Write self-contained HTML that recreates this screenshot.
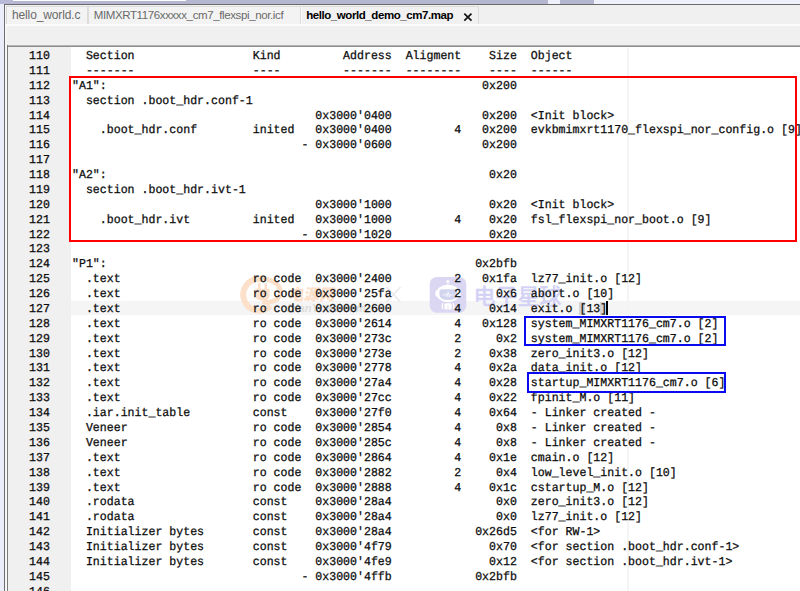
<!DOCTYPE html>
<html><head><meta charset="utf-8"><title>hello_world_demo_cm7.map</title>
<style>
html,body{margin:0;padding:0}
body{width:800px;height:591px;overflow:hidden;position:relative;background:#f0f0f0;font-family:"Liberation Sans",sans-serif}
.abs{position:absolute}
#topstrip{left:0;top:0;width:800px;height:4px;background:#eef0fb}
#leftstrip{left:0;top:0;width:4px;height:591px;background:#ebedfa}
#frameT{left:4px;top:3.6px;width:796px;height:1.1px;background:#6a6a6a}
#frameL{left:4px;top:4px;width:1px;height:587px;background:#6e6e6e}
#frameL2{left:5px;top:5px;width:2px;height:586px;background:#f7f7f7}
#tabs{left:6px;top:6px;height:18px;width:794px}
.tab{position:absolute;top:0;height:17px;border:1px solid #dcdcdc;border-bottom:none;background:#f3f3f3;font-size:12px;line-height:17px;color:#6a6a6a;white-space:nowrap;box-sizing:content-box}
.tab span{position:absolute;top:0}
#whiteline{left:5px;top:24px;width:795px;height:2px;background:#fbfbfd}
#edT1{left:7px;top:45px;width:793px;height:1px;background:#b4b4b4}
#edT2{left:7px;top:46px;width:793px;height:1px;background:#8c8c8c}
#edL{left:7px;top:45px;width:1px;height:546px;background:#7c7c7c}
#editor{left:8px;top:47px;width:792px;height:544px;background:#fff;overflow:hidden}
#gutter{left:8px;top:47px;width:63px;height:544px;background:#f0f0f0}
#edge{left:627px;top:48px;width:2px;height:543px;background:#f4f4f4}
#curline{left:71px;top:301px;width:729px;height:14px;background:#f5f5f5}
.ln{position:absolute;left:0;height:15px;line-height:15px;white-space:pre;font-family:"Liberation Mono","DejaVu Sans Mono",monospace;font-size:12.0px;letter-spacing:0.000px;color:#0c0c0c;-webkit-text-stroke:0.28px #0c0c0c}
.no{position:absolute;left:28.8px;top:0;transform:scale(0.96528,1.0) skewX(0.05deg);transform-origin:0 10px}
.tx{position:absolute;left:72.0px;top:0;transform:scale(0.96528,1.0) skewX(0.05deg);transform-origin:0 10px}
.box{position:absolute;box-sizing:border-box;border:2px solid #f00}
.bbox{border-color:#0a0af0}
</style></head>
<body>
<div class="abs" id="topstrip"></div>
<div class="abs" style="left:0;top:0;width:13px;height:4px;background:#b8b9d6"></div>
<div class="abs" style="left:13px;top:0;width:173px;height:1px;background:#fcfcff"></div>
<div class="abs" style="left:13px;top:1px;width:173px;height:3px;background:#b5b6d0"></div>
<div class="abs" style="left:186px;top:0;width:362px;height:4px;background:#b5b6d0"></div>
<div class="abs" style="left:560px;top:0;width:33.5px;height:4px;background:#b5b6d0"></div>
<div class="abs" id="leftstrip" style="top:4px"></div>
<div class="abs" id="frameT"></div>
<div class="abs" id="frameL"></div>
<div class="abs" id="frameL2"></div>
<div class="abs" id="tabs">
  <div class="tab" style="left:0;width:80px"><span id="t1" style="left:5px;letter-spacing:-0.13px">hello_world.c</span></div>
  <div class="tab" style="left:82px;width:211px"><span id="t2" style="left:4.7px;font-size:11.5px;letter-spacing:-0.38px">MIMXRT1176xxxxx_cm7_flexspi_nor.icf</span></div>
  <div class="tab" style="left:295px;width:176px;color:#000;background:#f1f1f1;border-left-color:#fbfbfb"><span id="t3" style="left:4.2px;font-weight:bold;font-size:11.5px;letter-spacing:-0.43px">hello_world_demo_cm7.map</span><svg style="position:absolute;left:161px;top:5px" width="10" height="10" viewBox="0 0 10 10"><path d="M1.3 1.6 L8.5 8.6 M8.5 1.6 L1.3 8.6" stroke="#111" stroke-width="1.7" fill="none"/></svg></div>
</div>
<div class="abs" id="whiteline"></div>
<div class="abs" id="edT1"></div>
<div class="abs" id="edT2"></div>
<div class="abs" id="edL"></div>
<div class="abs" id="editor"></div>
<div class="abs" id="gutter"></div>
<div class="abs" id="curline"></div>
<div class="abs" id="edge"></div>
<div class="abs" style="left:579.4px;top:302px;width:5.6px;height:13px;background:#d2d2d2"></div>
<div class="abs" style="left:600.2px;top:302px;width:4.8px;height:13px;background:#d2d2d2"></div>
<div class="abs" style="left:605.8px;top:301px;width:1.8px;height:14px;background:#000"></div>
<svg class="abs" style="left:0;top:0" width="800" height="591" viewBox="0 0 800 591">
  <!-- orange watermark -->
  <g fill="none" stroke="#fce0ca" stroke-linecap="butt">
    <path d="M270.4 306 A15.9 15.9 0 1 1 259.1 278.85 L261 278.9" stroke-width="6"/>
    <path d="M259.1 278.35 C270 278.35 280.2 283.5 280.2 291.5 C280.4 299.5 272 304 262.5 301.6" stroke-width="4.8"/>
  </g>
  <g fill="#fce0ca">
    <rect x="258" y="283" width="2.5" height="6.5" rx="0.8"/>
    <rect x="264.5" y="283" width="2.5" height="6.5" rx="0.8"/>
    <path d="M255.3 288.8 H269.6 V295 Q269.6 300.5 262.5 300.5 Q255.3 300.5 255.3 295 Z"/>
  </g>
  <text transform="translate(288 299.8) skewX(-10)" font-family="'Liberation Sans','Noto Sans CJK SC',sans-serif" font-weight="900" font-size="15.6" fill="#fddfc9">电源网</text>
  <text x="287" y="312.2" font-family="'Liberation Sans',sans-serif" font-weight="bold" font-style="italic" font-size="11" letter-spacing="0.25" fill="#dcdcdc">DianYuan.com</text>
  <path d="M386.5 287 L400.5 302 M400.5 287 L386.5 302" stroke="#ebebeb" stroke-width="1.8" fill="none"/>
  <!-- purple watermark -->
  <rect x="429.7" y="277" width="36.6" height="35.8" rx="7" fill="#dbd7f2"/>
  <circle cx="447.9" cy="281.6" r="1.6" fill="#fff"/>
  <rect x="447.5" y="282" width="0.9" height="3.5" fill="#f4f2fb"/>
  <ellipse cx="448" cy="293.4" rx="11.6" ry="8.8" fill="#fff"/>
  <rect x="435.4" y="290.4" width="3" height="6" rx="1.4" fill="#fff"/>
  <rect x="457.6" y="290.4" width="3" height="6" rx="1.4" fill="#fff"/>
  <path d="M441.5 289.2 H454.5 Q457 289.2 457 292 V294 Q457 300 448 300 Q439.4 300 439.4 294 V292 Q439.4 289.2 441.5 289.2 Z" fill="#d2d5ee"/>
  <path d="M442.5 295 H445 L446 293.6 L447 296.6 L448.2 291.8 L449.4 297 L450.4 294 L451.2 295 H453.5" stroke="#fff" stroke-width="0.7" fill="none"/>
  <rect x="444.4" y="303.3" width="7.2" height="6.3" rx="1.6" fill="#fff"/>
  <rect x="447.6" y="305.5" width="0.8" height="4.1" fill="#dbd7f2"/>
  <path d="M442.8 303.6 Q441.6 306 442.6 308.4" stroke="#fff" stroke-width="1.3" fill="none" stroke-linecap="round"/>
  <path d="M453.2 303.6 Q454.4 306 453.4 308.4" stroke="#fff" stroke-width="1.3" fill="none" stroke-linecap="round"/>
  <text x="473.4" y="303.8" font-family="'Liberation Sans','Noto Sans CJK SC',sans-serif" font-weight="500" font-size="22" fill="#d3d2f5" stroke="#d3d2f5" stroke-width="0.3">电子星球</text>
</svg>
<div class="abs" id="code" style="left:0;top:0;width:800px;height:591px;overflow:hidden">
<div class="ln" style="top:49.00px"><span class="no">110</span><span class="tx">  Section                 Kind         Address  Aligment    Size  Object</span></div>
<div class="ln" style="top:63.88px"><span class="no">111</span><span class="tx">  -------                 ----         -------  --------    ----  ------</span></div>
<div class="ln" style="top:78.76px"><span class="no">112</span><span class="tx">"A1":                                                      0x200</span></div>
<div class="ln" style="top:93.64px"><span class="no">113</span><span class="tx">  section .boot_hdr.conf-1</span></div>
<div class="ln" style="top:108.52px"><span class="no">114</span><span class="tx">                                   0x3000'0400             0x200  &lt;Init block&gt;</span></div>
<div class="ln" style="top:123.40px"><span class="no">115</span><span class="tx">    .boot_hdr.conf        inited   0x3000'0400         4   0x200  evkbmimxrt1170_flexspi_nor_config.o [9]</span></div>
<div class="ln" style="top:138.28px"><span class="no">116</span><span class="tx">                                 - 0x3000'0600             0x200</span></div>
<div class="ln" style="top:153.16px"><span class="no">117</span><span class="tx"></span></div>
<div class="ln" style="top:168.04px"><span class="no">118</span><span class="tx">"A2":                                                       0x20</span></div>
<div class="ln" style="top:182.92px"><span class="no">119</span><span class="tx">  section .boot_hdr.ivt-1</span></div>
<div class="ln" style="top:197.80px"><span class="no">120</span><span class="tx">                                   0x3000'1000              0x20  &lt;Init block&gt;</span></div>
<div class="ln" style="top:212.68px"><span class="no">121</span><span class="tx">    .boot_hdr.ivt         inited   0x3000'1000         4    0x20  fsl_flexspi_nor_boot.o [9]</span></div>
<div class="ln" style="top:227.56px"><span class="no">122</span><span class="tx">                                 - 0x3000'1020              0x20</span></div>
<div class="ln" style="top:242.44px"><span class="no">123</span><span class="tx"></span></div>
<div class="ln" style="top:257.32px"><span class="no">124</span><span class="tx">"P1":                                                     0x2bfb</span></div>
<div class="ln" style="top:272.20px"><span class="no">125</span><span class="tx">  .text                   ro code  0x3000'2400         2   0x1fa  lz77_init.o [12]</span></div>
<div class="ln" style="top:287.08px"><span class="no">126</span><span class="tx">  .text                   ro code  0x3000'25fa         2     0x6  abort.o [10]</span></div>
<div class="ln" style="top:301.96px"><span class="no">127</span><span class="tx">  .text                   ro code  0x3000'2600         4    0x14  exit.o [13]</span></div>
<div class="ln" style="top:316.84px"><span class="no">128</span><span class="tx">  .text                   ro code  0x3000'2614         4   0x128  system_MIMXRT1176_cm7.o [2]</span></div>
<div class="ln" style="top:331.72px"><span class="no">129</span><span class="tx">  .text                   ro code  0x3000'273c         2     0x2  system_MIMXRT1176_cm7.o [2]</span></div>
<div class="ln" style="top:346.60px"><span class="no">130</span><span class="tx">  .text                   ro code  0x3000'273e         2    0x38  zero_init3.o [12]</span></div>
<div class="ln" style="top:361.48px"><span class="no">131</span><span class="tx">  .text                   ro code  0x3000'2778         4    0x2a  data_init.o [12]</span></div>
<div class="ln" style="top:376.36px"><span class="no">132</span><span class="tx">  .text                   ro code  0x3000'27a4         4    0x28  startup_MIMXRT1176_cm7.o [6]</span></div>
<div class="ln" style="top:391.24px"><span class="no">133</span><span class="tx">  .text                   ro code  0x3000'27cc         4    0x22  fpinit_M.o [11]</span></div>
<div class="ln" style="top:406.12px"><span class="no">134</span><span class="tx">  .iar.init_table         const    0x3000'27f0         4    0x64  - Linker created -</span></div>
<div class="ln" style="top:421.00px"><span class="no">135</span><span class="tx">  Veneer                  ro code  0x3000'2854         4     0x8  - Linker created -</span></div>
<div class="ln" style="top:435.88px"><span class="no">136</span><span class="tx">  Veneer                  ro code  0x3000'285c         4     0x8  - Linker created -</span></div>
<div class="ln" style="top:450.76px"><span class="no">137</span><span class="tx">  .text                   ro code  0x3000'2864         4    0x1e  cmain.o [12]</span></div>
<div class="ln" style="top:465.64px"><span class="no">138</span><span class="tx">  .text                   ro code  0x3000'2882         2     0x4  low_level_init.o [10]</span></div>
<div class="ln" style="top:480.52px"><span class="no">139</span><span class="tx">  .text                   ro code  0x3000'2888         4    0x1c  cstartup_M.o [12]</span></div>
<div class="ln" style="top:495.40px"><span class="no">140</span><span class="tx">  .rodata                 const    0x3000'28a4               0x0  zero_init3.o [12]</span></div>
<div class="ln" style="top:510.28px"><span class="no">141</span><span class="tx">  .rodata                 const    0x3000'28a4               0x0  lz77_init.o [12]</span></div>
<div class="ln" style="top:525.16px"><span class="no">142</span><span class="tx">  Initializer bytes       const    0x3000'28a4            0x26d5  &lt;for RW-1&gt;</span></div>
<div class="ln" style="top:540.04px"><span class="no">143</span><span class="tx">  Initializer bytes       const    0x3000'4f79              0x70  &lt;for section .boot_hdr.conf-1&gt;</span></div>
<div class="ln" style="top:554.92px"><span class="no">144</span><span class="tx">  Initializer bytes       const    0x3000'4fe9              0x12  &lt;for section .boot_hdr.ivt-1&gt;</span></div>
<div class="ln" style="top:569.80px"><span class="no">145</span><span class="tx">                                 - 0x3000'4ffb            0x2bfb</span></div>
<div class="ln" style="top:584.68px"><span class="no">146</span><span class="tx"></span></div>
</div>
<div class="box" style="left:69px;top:76px;width:728px;height:166px"></div>
<div class="box bbox" style="left:524px;top:316px;width:202px;height:30px"></div>
<div class="box bbox" style="left:527px;top:372px;width:199px;height:21px"></div>
</body></html>
